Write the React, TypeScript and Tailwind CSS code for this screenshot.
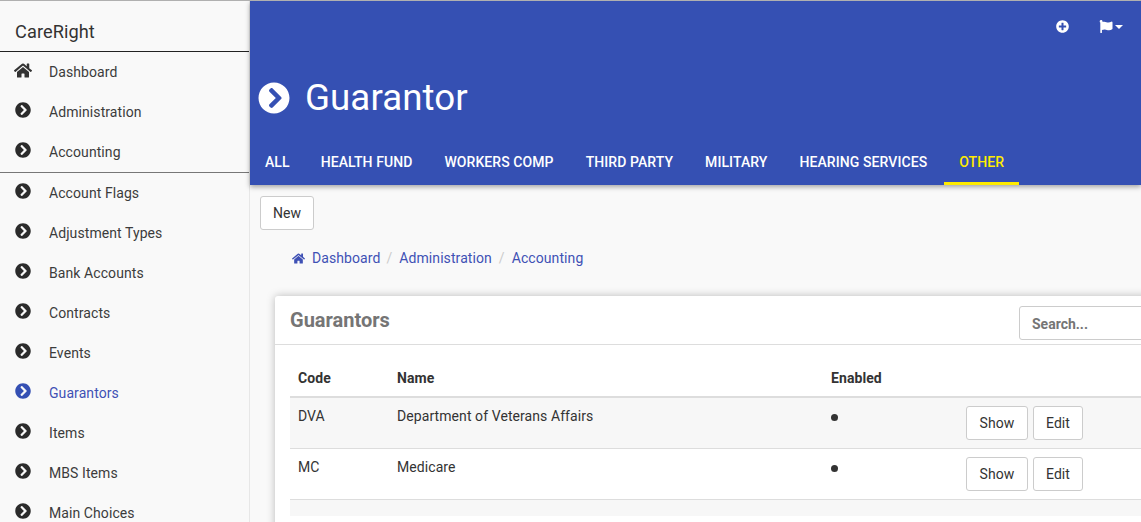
import React from "react";
import { FaChevronCircleRight, FaFlag, FaHome, FaPlusCircle } from "react-icons/fa";

const topItems = ["Administration", "Accounting"];
const subItems = [
  "Account Flags",
  "Adjustment Types",
  "Bank Accounts",
  "Contracts",
  "Events",
  "Guarantors",
  "Items",
  "MBS Items",
  "Main Choices",
];
const tabs = ["All", "Health Fund", "Workers Comp", "Third Party", "Military", "Hearing Services", "Other"];
const rows = [
  { code: "DVA", name: "Department of Veterans Affairs", striped: true },
  { code: "MC", name: "Medicare", striped: false },
];

const NavItem: React.FC<{ label: string; active?: boolean; home?: boolean }> = ({ label, active, home }) => (
  <div className={`flex h-10 shrink-0 items-center pl-[15px] text-sm ${active ? "text-[#3f51b5]" : "text-[#3c3c3c]"}`}>
    <span className="flex w-[34px] shrink-0">
      {home ? (
        <FaHome className="ml-[-1px] h-[17px] w-[18px] -translate-y-0.5 text-[#333]" />
      ) : (
        <FaChevronCircleRight className={`h-4 w-4 -translate-y-0.5 ${active ? "text-[#3550b3]" : "text-[#2b2b2b]"}`} />
      )}
    </span>
    {label}
  </div>
);

const ActionButton: React.FC<{ label: string; className: string }> = ({ label, className }) => (
  <button className={`h-[34px] rounded-[3px] border border-[#ccc] bg-white text-sm text-[#333] ${className}`}>
    {label}
  </button>
);

const App: React.FC = () => {
  return (
    <div className="flex h-[522px] w-[1141px] overflow-hidden border-t border-[#b0b0b0] bg-[#f9f9f9] font-['Roboto',sans-serif] tracking-[0.005em]">
      <aside className="flex w-[250px] shrink-0 flex-col border-r border-[#e7e7e7]">
        <div className="flex h-[51px] shrink-0 items-center border-b border-[#222] pl-[15px] pt-[12px] text-[18.2px] leading-none text-[#333]">
          CareRight
        </div>
        <div className="shrink-0 border-b border-[#777]">
          <NavItem label="Dashboard" home />
          {topItems.map((item) => (
            <NavItem key={item} label={item} />
          ))}
        </div>
        {subItems.map((item) => (
          <NavItem key={item} label={item} active={item === "Guarantors"} />
        ))}
      </aside>

      <main className="flex min-w-0 flex-1 flex-col">
        <header className="relative flex h-[184px] shrink-0 flex-col bg-[#3550b3] text-white shadow-[0_2px_5px_rgba(0,0,0,0.35)]">
          <div className="flex h-[50px] shrink-0 items-center justify-end">
            <FaPlusCircle className="mr-[30px] h-[13px] w-[13px]" />
            <FaFlag className="h-[13px] w-[14px]" />
            <span className="ml-[2px] mr-[18px] mt-0.5 h-0 w-0 border-x-4 border-t-4 border-x-transparent border-t-white" />
          </div>
          <div className="flex h-[90px] shrink-0 items-center pl-2 pt-[4px]">
            <FaChevronCircleRight className="h-8 w-8" />
            <h1 className="ml-[15px] text-[36.7px] font-normal">Guarantor</h1>
          </div>
          <nav className="flex flex-1 gap-[2px]">
            {tabs.map((tab) => (
              <div
                key={tab}
                className={`flex items-center px-[15px] text-sm font-medium uppercase first:pr-[14px] ${
                  tab === "Other" ? "border-b-[3px] border-[#ffeb00] text-[#ffeb00]" : "pb-[3px]"
                }`}
              >
                {tab}
              </div>
            ))}
          </nav>
        </header>

        <div className="ml-[10px] mt-[11px] shrink-0">
          <ActionButton label="New" className="w-[54px]" />
        </div>

        <div className="ml-[42px] mt-[18px] flex h-5 shrink-0 items-center text-sm text-[#3f51b5]">
          <FaHome className="mr-[7px] h-[13px] w-[13px]" />
          Dashboard
          <span className="ml-[6px] mr-[7px] text-[#ccc]">/</span>
          Administration
          <span className="mx-[7px] text-[#ccc]">/</span>
          Accounting
        </div>

        <section className="ml-[25px] mt-[28px] w-[950px] shrink-0 rounded-t-[3px] bg-white pb-10 shadow-[0_0_8px_rgba(0,0,0,0.25)]">
          <div className="flex h-[49px] items-center justify-between border-b border-[#ddd] px-[15px]">
            <h2 className="text-xl font-bold tracking-normal text-[#757575]">Guarantors</h2>
            <div className="mt-[6px] flex h-[34px] w-[191px] items-center rounded-[3px] border border-[#ccc] pl-3 pt-[1px] text-sm font-bold tracking-normal text-[#757575]">
              Search...
            </div>
          </div>
          <div className="mx-[15px] mt-[16px]">
            <div className="grid h-[37px] grid-cols-[99px_434px_135px_1fr] items-center border-b-2 border-[#ddd] pb-[2px] pl-2 text-sm font-bold text-[#333]">
              <span>Code</span>
              <span>Name</span>
              <span>Enabled</span>
            </div>
            {rows.map((row) => (
              <div
                key={row.code}
                className={`grid h-[51px] grid-cols-[99px_434px_135px_1fr] border-b border-[#ddd] pl-2 text-sm text-[#333] ${
                  row.striped ? "bg-[#f7f7f7]" : "bg-white"
                }`}
              >
                <span className="pt-2">{row.code}</span>
                <span className="pt-2">{row.name}</span>
                <span className="pt-[16px]">
                  <span className="block h-[7px] w-[7px] rounded-full bg-[#333]" />
                </span>
                <span className="flex gap-[5px] pt-2">
                  <ActionButton label="Show" className="w-[62px]" />
                  <ActionButton label="Edit" className="w-[50px]" />
                </span>
              </div>
            ))}
            <div className="h-4 bg-[#f7f7f7]" />
          </div>
        </section>
      </main>
    </div>
  );
};

export default App;
